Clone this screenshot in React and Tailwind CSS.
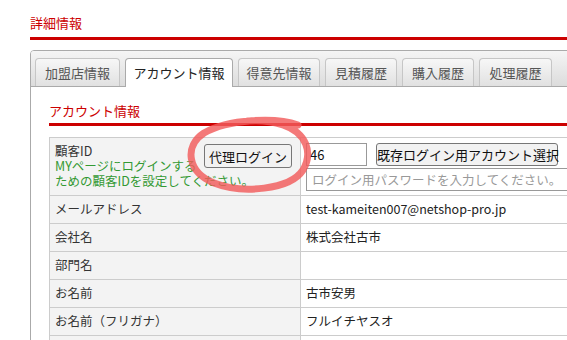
import React from "react";

const tabs = [
  { label: "加盟店情報", w: "w-[85px]" },
  { label: "アカウント情報", w: "w-[108px]", active: true },
  { label: "得意先情報", w: "w-[82px]" },
  { label: "見積履歴", w: "w-[72px]" },
  { label: "購入履歴", w: "w-[72px]" },
  { label: "処理履歴", w: "w-[73px]" },
];

const rows = [
  { label: "メールアドレス", value: "test-kameiten007@netshop-pro.jp" },
  { label: "会社名", value: "株式会社古市" },
  { label: "部門名", value: "" },
  { label: "お名前", value: "古市安男" },
  { label: "お名前（フリガナ）", value: "フルイチヤスオ" },
  { label: "郵便番号", value: "1540001" },
];

const App = () => {
  return (
    <div
      className="relative w-[567px] h-[340px] overflow-hidden bg-white text-[12px] text-[#333]"
      style={{ fontFamily: '"Noto Sans CJK JP", "Noto Sans", sans-serif' }}
    >
      <div className="pl-[30px] pt-[13px]">
        <h1 className="text-[#cc0000] text-[13px] leading-[20px] pb-[4px] border-b-[3px] border-[#cc0000] font-normal">
          詳細情報
        </h1>

        <div className="mt-[10px] w-[600px] border border-[#aaa] rounded-t-[4px]">
          {/* tab bar */}
          <div className="flex gap-[5px] h-[36px] pt-[7px] pl-[4px] bg-gradient-to-b from-[#f5f5f5] to-[#dcdcdc] border-b border-[#aaa] rounded-t-[3px]">
            {tabs.map((t) =>
              t.active ? (
                <div
                  key={t.label}
                  className={`${t.w} h-[29px] -mb-px flex items-center justify-center bg-white border border-b-0 border-[#aaa] rounded-t-[4px] text-[13px] text-[#222]`}
                >
                  {t.label}
                </div>
              ) : (
                <div
                  key={t.label}
                  className={`${t.w} h-[28px] flex items-center justify-center bg-gradient-to-b from-[#f7f7f7] to-[#e1e1e1] border border-b-0 border-[#c6c6c6] rounded-t-[4px] text-[13px] text-[#555]`}
                >
                  {t.label}
                </div>
              )
            )}
          </div>

          {/* content */}
          <div className="pl-[18px] pt-[14px] pb-[20px]">
            <h2 className="text-[#cc0000] text-[13px] leading-[20px] pb-[2px] border-b-[3px] border-[#cc0000] font-normal">
              アカウント情報
            </h2>

            <div className="mt-[11px] grid grid-cols-[251px_330px] border-l border-t border-[#ccc]">
              {/* first row */}
              <div className="relative h-[58px] bg-[#f3f3f3] border-r border-b border-[#ccc] pl-[5px] pt-[5px] leading-[15px] text-[12.5px]">
                <div>顧客ID</div>
                <div className="text-[#339933]">MYページにログインする</div>
                <div className="text-[#339933]">ための顧客IDを設定してください。</div>
                <button className="absolute right-[8px] top-[6px] w-[88px] h-[24px] bg-[#f2f2f2] border border-[#777] rounded-[3px] text-[13px] text-[#111]">
                  代理ログイン
                </button>
              </div>
              <div className="h-[58px] border-r border-b border-[#ccc] pl-[5px] pt-[5px]">
                <div className="flex gap-[9px]">
                  <input
                    readOnly
                    value="46"
                    className="w-[61px] h-[23px] border border-[#999] px-[3px] text-[13px] text-[#111] outline-none"
                  />
                  <button className="w-[182px] h-[23px] bg-[#f2f2f2] border border-[#777] rounded-[3px] text-[13px] text-[#111] whitespace-nowrap">
                    既存ログイン用アカウント選択
                  </button>
                </div>
                <input
                  readOnly
                  placeholder="ログイン用パスワードを入力してください。"
                  className="mt-[2px] w-[300px] h-[23px] border border-[#999] px-[5px] text-[12.5px] placeholder:text-[#999] outline-none"
                />
              </div>

              {rows.map((r) => (
                <React.Fragment key={r.label}>
                  <div className="h-[28px] flex items-center bg-[#f3f3f3] border-r border-b border-[#ccc] pl-[5px] text-[12.5px]">
                    {r.label}
                  </div>
                  <div className="h-[28px] flex items-center border-r border-b border-[#ccc] pl-[5px] text-[12.5px] text-[#222]">
                    {r.value}
                  </div>
                </React.Fragment>
              ))}
            </div>
          </div>
        </div>
      </div>

      {/* hand-drawn red circle annotation */}
      <svg
        className="absolute left-[178px] top-[110px] pointer-events-none"
        width="140"
        height="90"
        viewBox="0 0 140 90"
      >
        <path
          d="M120 15 C 98 7, 50 9, 26 23 C 6 36, 9 62, 36 73 C 64 84, 112 80, 125 60 C 135 43, 129 23, 105 15 C 93 11, 81 10, 70 11"
          fill="none"
          stroke="#f25c5c"
          strokeOpacity="0.82"
          strokeWidth="7"
          strokeLinecap="round"
        />
      </svg>
    </div>
  );
};

export default App;
